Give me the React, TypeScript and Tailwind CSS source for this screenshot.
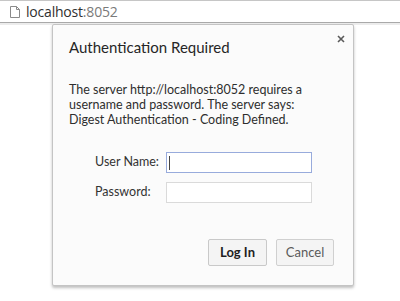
import React from 'react';

function PageIcon() {
    return (
        <svg width="10" height="12" viewBox="0 0 10 12" className="shrink-0">
            <path d="M0.5 0.5 H6.5 L9.5 3.5 V11.5 H0.5 Z" fill="white" stroke="#8a8a8a" strokeWidth="1" />
            <path d="M6.5 0.5 V3.5 H9.5" fill="none" stroke="#8a8a8a" strokeWidth="1" />
        </svg>
    );
}

function CloseIcon() {
    return (
        <svg width="8" height="8" viewBox="0 0 8 8">
            <path d="M1 1 L7 7 M7 1 L1 7" stroke="#5a5a5a" strokeWidth="1.6" />
        </svg>
    );
}

export default function App() {
    return (
        <div className="relative w-[400px] h-[301px] overflow-hidden bg-white font-['Lato',sans-serif]">
            {/* address bar */}
            <div className="h-[23px] border-t border-[#c6c6c6] border-b border-b-[#a9a9a9] flex items-center pl-[10px] gap-[6px] font-['Open_Sans',sans-serif]">
                <PageIcon />
                <span className="text-[14px] leading-none text-[#303030] tracking-[-0.2px]">
                    localhost<span className="text-[#7a7a7a]">:8052</span>
                </span>
            </div>
            <div className="h-[2px] bg-[#ececec]" />

            {/* auth dialog */}
            <div className="absolute left-[52px] top-[24px] w-[302px] h-[262px] bg-[#fbfbfb] border border-[#c4c4c4] rounded-[2px] shadow-[0_2px_3px_rgba(0,0,0,0.25)]">
                <button className="absolute right-[8px] top-[10px] w-[8px] h-[8px] flex items-center justify-center">
                    <CloseIcon />
                </button>
                <div className="pl-[16px] pr-[16px] pt-[12px]">
                    <h1 className="text-[15px] leading-[20px] text-[#262626]">Authentication Required</h1>
                    <p className="mt-[25px] text-[12.5px] leading-[15px] text-[#2e2e2e] whitespace-nowrap">
                        The server http://localhost:8052 requires a<br />
                        username and password. The server says:<br />
                        Digest Authentication - Coding Defined.
                    </p>
                    <div className="mt-[25px] pl-[26px] grid grid-cols-[71px_146px] gap-y-[9px] items-center text-[12.5px] text-[#333]">
                        <label>User Name:</label>
                        <div className="h-[21px] border border-[#98abdc] bg-white flex items-center pl-[2px]">
                            <div className="w-px h-[14px] bg-[#444]" />
                        </div>
                        <label>Password:</label>
                        <div className="h-[21px] border border-[#dadada] bg-white" />
                    </div>
                </div>
                <div className="absolute right-[19px] bottom-[19px] flex gap-[9px]">
                    <button className="w-[59px] h-[27px] border border-[#c9c9c9] rounded-[2px] bg-[#f4f4f4] text-[13px] font-bold text-[#1e1e1e]">
                        Log In
                    </button>
                    <button className="w-[58px] h-[27px] border border-[#d0d0d0] rounded-[2px] bg-[#f4f4f4] text-[13px] text-[#5a5a5a]">
                        Cancel
                    </button>
                </div>
            </div>
        </div>
    );
}
